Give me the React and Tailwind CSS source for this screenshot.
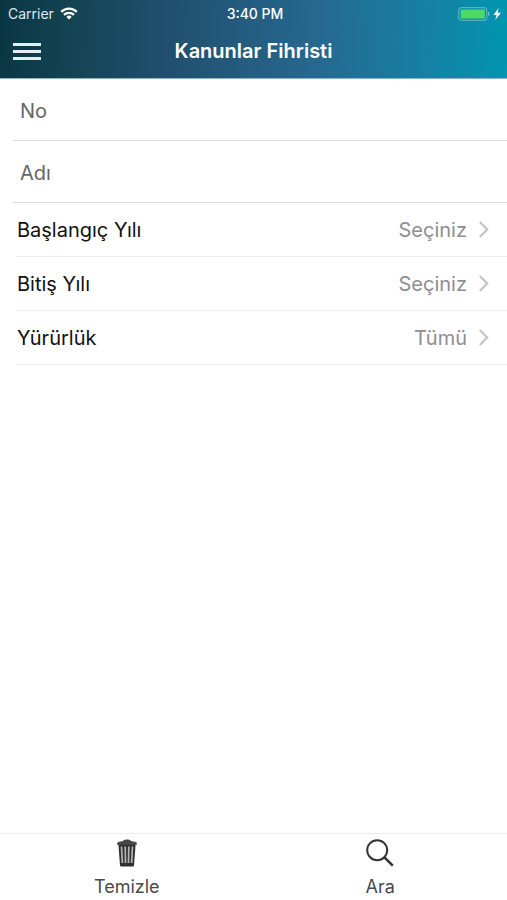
import React from "react";

function WifiIcon() {
  return (
    <svg aria-hidden="true" viewBox="0 0 18 13" className="h-[13px] w-[18px]" fill="none" stroke="white" strokeWidth="2.2">
      <path d="M1.2 4.9a11 11 0 0 1 15.6 0" />
      <path d="M4 7.9a7.1 7.1 0 0 1 10 0" />
      <path d="M9 12.6 6.3 9.9a3.8 3.8 0 0 1 5.4 0Z" fill="white" stroke="none" />
    </svg>
  );
}

function BatteryIcon() {
  return (
    <svg aria-hidden="true" viewBox="0 0 44 14" className="h-[14px] w-[44px]" fill="none">
      <rect x="0.7" y="0.7" width="28" height="12.6" rx="3" stroke="#7fc0d2" strokeOpacity="0.7" strokeWidth="1.2" />
      <rect x="2.6" y="2.6" width="24.2" height="8.8" rx="1" fill="#4cd964" />
      <path d="M30 4.8c1.8.6 1.8 3.8 0 4.4Z" fill="#7fc0d2" />
      <path d="M40.6 1 35.4 7.9h3.2L37.2 13l5.8-7.2h-3.5Z" fill="white" />
    </svg>
  );
}

function ChevronIcon() {
  return (
    <svg aria-hidden="true" viewBox="0 0 10 17" className="pointer-events-none h-[17px] w-[10px]" fill="none" stroke="#c4c4c8" strokeWidth="2.2">
      <path d="m.8 1 7.4 7.5L.8 16" />
    </svg>
  );
}

function TrashIcon() {
  return (
    <svg aria-hidden="true" viewBox="0 0 20 28" className="h-[28px] w-[20px]" fill="none">
      <path d="M6 2C7 0 13 0 14 2l4.8.9c.8.2 1.1 1 1.1 2.8H.1c0-1.8.3-2.6 1.1-2.8Z" fill="#484848" />
      <path d="M1.4 5.2h17.2L17 26.2c-.1.9-.6 1.4-1.4 1.4H4.4c-.8 0-1.3-.5-1.4-1.4Z" fill="#303030" />
      <path d="M4.5 7.5l.9 16.5M8.2 7.5l.3 16.5M11.8 7.5l-.3 16.5M15.5 7.5l-.9 16.5" stroke="#b4b4b4" strokeWidth="1.7" />
    </svg>
  );
}

function SearchIcon() {
  return (
    <svg aria-hidden="true" viewBox="0 0 28 28" className="h-[28px] w-[28px]" fill="none" stroke="#333" strokeWidth="2">
      <circle cx="11.2" cy="11.2" r="10" />
      <path d="m18.4 18.4 8.4 8.2" strokeWidth="2.5" />
    </svg>
  );
}

function TextRow({ label }) {
  return (
    <div className="ml-[13px] border-b border-[#dedede]">
      <input
        type="text"
        aria-label={label}
        placeholder={label}
        className="block h-[61px] w-full bg-transparent px-[7px] pt-[2px] text-[20px] text-[#333] outline-none placeholder:text-[#666]"
      />
    </div>
  );
}

function SelectRow({ id, label, options }) {
  return (
    <div className="ml-[17px] flex h-[54px] items-center border-b border-[#ececec] pr-[18px]">
      <label htmlFor={id} className="shrink-0 text-[20px] leading-6 text-[#111]">
        {label}
      </label>
      <select
        id={id}
        className="mr-3 h-full min-w-0 flex-1 appearance-none bg-transparent text-[20px] text-[#8e8e93] outline-none [text-align-last:right]"
      >
        {options.map((option) => (
          <option key={option}>{option}</option>
        ))}
      </select>
      <ChevronIcon />
    </div>
  );
}

function ToolbarButton({ label, icon }) {
  return (
    <button type="button" className="flex flex-1 flex-col items-center gap-2 pt-[5px] text-[18px] leading-6 text-[#4a4a4a]">
      {icon}
      {label}
    </button>
  );
}

const years = ["Seçiniz", "2018", "2017", "2016"];

export default function App() {
  return (
    <div className="flex min-h-screen flex-col bg-white font-['Inter','Liberation_Sans',sans-serif]">
      <header className="border-b border-[#8fb5c4] bg-[linear-gradient(92deg,#0a3644_0%,#154555_16%,#20506f_34%,#26688f_62%,#1680a3_84%,#0096b0_100%)] text-white">
        <div className="grid h-[27px] grid-cols-[1fr_auto_1fr] items-center pr-[5px] pl-2 text-[14px] leading-5">
          <div className="flex items-center gap-[6px] text-[#dfe9ed]">
            Carrier
            <WifiIcon />
          </div>
          <time className="font-medium">3:40 PM</time>
          <div className="flex justify-end">
            <BatteryIcon />
          </div>
        </div>
        <div className="grid h-[51px] grid-cols-[1fr_auto_1fr] items-center px-[13px] pb-[3px]">
          <button type="button" aria-label="Menü" className="flex w-7 flex-col gap-1">
            <span className="h-[3px] bg-[#e3f0f3]" />
            <span className="h-[3px] bg-[#e3f0f3]" />
            <span className="h-[3px] bg-[#e3f0f3]" />
          </button>
          <h1 className="text-[20px] leading-6 font-semibold">Kanunlar Fihristi</h1>
        </div>
      </header>

      <main className="flex-1">
        <TextRow label="No" />
        <TextRow label="Adı" />
        <SelectRow id="start-year" label="Başlangıç Yılı" options={years} />
        <SelectRow id="end-year" label="Bitiş Yılı" options={years} />
        <SelectRow id="status" label="Yürürlük" options={["Tümü", "Yürürlükte", "Mülga"]} />
      </main>

      <footer className="flex h-[67px] border-t border-[#ececec]">
        <ToolbarButton label="Temizle" icon={<TrashIcon />} />
        <ToolbarButton label="Ara" icon={<SearchIcon />} />
      </footer>
    </div>
  );
}
